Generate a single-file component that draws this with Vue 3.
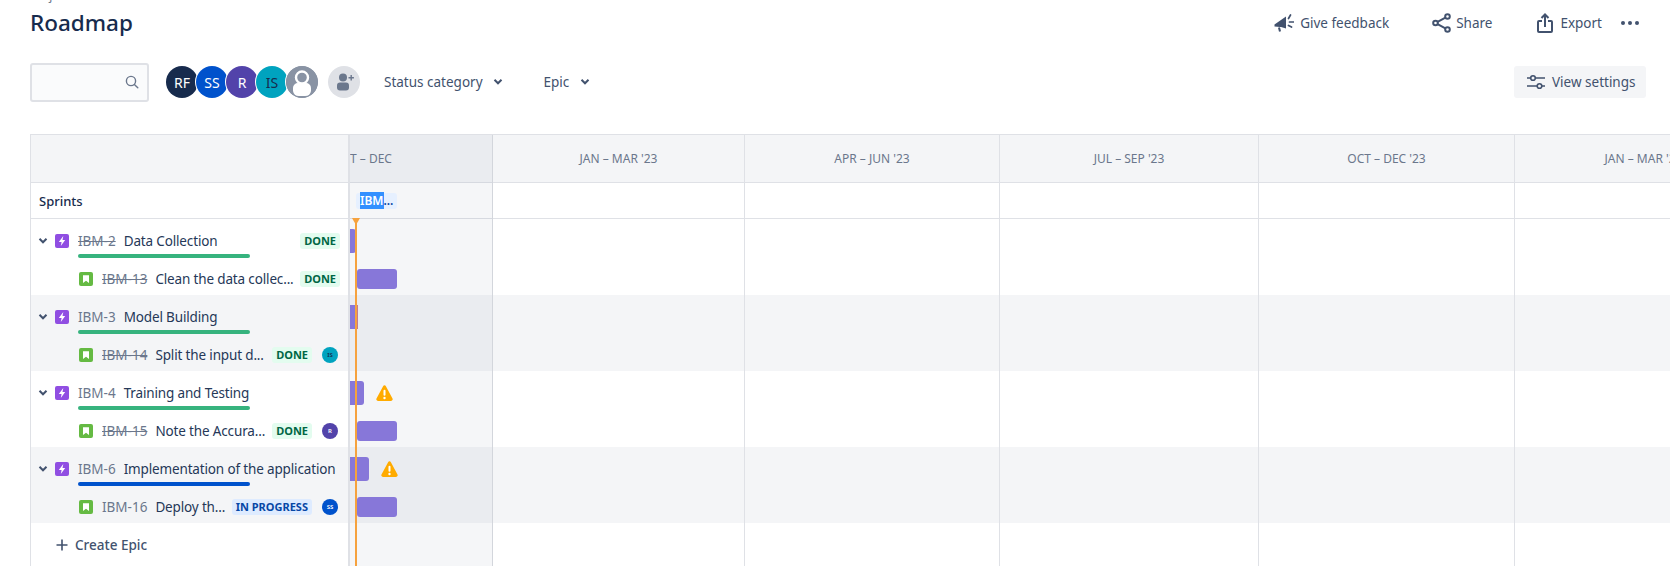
<script setup>
const quarters = [
  { label: 'OCT – DEC', width: 260, current: true },
  { label: "JAN – MAR '23", width: 252 },
  { label: "APR – JUN '23", width: 255 },
  { label: "JUL – SEP '23", width: 259 },
  { label: "OCT – DEC '23", width: 256 },
  { label: "JAN – MAR '24", width: 258 }
]
const groups = [
  {
    id: 'IBM-2', name: 'Data Collection', done: true, tone: 'green', bar: [0, 6], warnAt: null,
    story: { id: 'IBM-13', name: 'Clean the data collec...', done: true, status: 'DONE', avatar: null, bar: [7, 47] }
  },
  {
    id: 'IBM-3', name: 'Model Building', done: false, tone: 'green', bar: [0, 8], warnAt: null, tip: true,
    story: { id: 'IBM-14', name: 'Split the input d...', done: true, status: 'DONE', avatar: { text: 'IS', color: '#00A3BF', ink: '#172B4D' }, bar: null }
  },
  {
    id: 'IBM-4', name: 'Training and Testing', done: false, tone: 'green', bar: [0, 14], warnAt: 26,
    story: { id: 'IBM-15', name: 'Note the Accura...', done: true, status: 'DONE', avatar: { text: 'R', color: '#5243AA', ink: '#fff' }, bar: [7, 47] }
  },
  {
    id: 'IBM-6', name: 'Implementation of the application', done: false, tone: 'blue', bar: [0, 19], warnAt: 31,
    story: { id: 'IBM-16', name: 'Deploy th...', done: false, status: 'IN PROGRESS', avatar: { text: 'SS', color: '#0052CC', ink: '#fff' }, bar: [7, 47] }
  }
]
const people = [
  { text: 'RF', color: '#172B4D', ink: '#fff' },
  { text: 'SS', color: '#0052CC', ink: '#fff' },
  { text: 'R', color: '#5243AA', ink: '#fff' },
  { text: 'IS', color: '#00A3BF', ink: '#172B4D' }
]
</script>

<template>
  <div class="page">
    <div class="crumbs">Projects / IBM</div>
    <header class="top">
      <h1>Roadmap</h1>
      <div class="actions">
        <button class="act feedback">
          <svg width="20" height="20" viewBox="0 0 20 20"><path d="M0.500 11.500 12 3.500v12L7 14l-.9 0L0.500 13.500z" fill="#42526E"/><path d="M5 14.500l1 4" stroke="#42526E" stroke-width="2" fill="none"/><path d="M14.500 5.500l2-3.500M15.500 9h4M14.500 12.500l3 1.500" stroke="#42526E" stroke-width="1.700" fill="none" stroke-linecap="round"/></svg>
          Give feedback
        </button>
        <button class="act share">
          <svg width="19" height="20" viewBox="0 0 19 20" fill="none" stroke="#42526E" stroke-width="2"><circle cx="3.500" cy="10" r="2.300"/><circle cx="15.500" cy="3.500" r="2.300"/><circle cx="15.500" cy="16.500" r="2.300"/><path d="M5.600 8.900 13.400 4.700M5.600 11.100l7.800 4.200"/></svg>
          Share
        </button>
        <button class="act export">
          <svg width="16" height="20" viewBox="0 0 16 20" fill="none" stroke="#42526E" stroke-width="2"><path d="M5 8H2a1 1 0 0 0-1 1v9a1 1 0 0 0 1 1h12a1 1 0 0 0 1-1V9a1 1 0 0 0-1-1h-3"/><path d="M8 14V2M4.500 5 8 1.500 11.500 5"/></svg>
          Export
        </button>
        <button class="dots" aria-label="More"><i></i><i></i><i></i></button>
      </div>
    </header>

    <div class="toolbar">
      <div class="search">
        <svg width="16" height="16" viewBox="0 0 16 16" fill="none" stroke="#6B778C" stroke-width="1.400"><circle cx="7" cy="7" r="4.600"/><path d="m10.400 10.400 3.400 3.400" stroke-linecap="round"/></svg>
      </div>
      <div class="people">
        <span v-for="p in people" :key="p.text" class="person" :style="{ background: p.color, color: p.ink }">{{ p.text }}</span>
        <span class="person ghost">
          <svg width="32" height="32" viewBox="0 0 32 32"><circle cx="16" cy="16" r="16" fill="#8993A4"/><circle cx="16" cy="11.500" r="6" fill="none" stroke="#fff" stroke-width="2.400"/><path d="M7 25v-3a5 5 0 0 1 5-5h8a5 5 0 0 1 5 5v3a6 6 0 0 1-6 5h-6a6 6 0 0 1-6-5z" fill="#fff"/></svg>
        </span>
      </div>
      <span class="add">
        <svg width="20" height="20" viewBox="0 0 20 20" fill="#6B778C"><circle cx="9" cy="5.500" r="4"/><rect x="3" y="10.500" width="12" height="8" rx="3"/><path d="M14.500 5h2V3h1.400v2h2v1.400h-2v2h-1.400v-2h-2z"/></svg>
      </span>
      <button class="filter status">Status category
        <svg width="10" height="8" viewBox="0 0 10 8" fill="none" stroke="#42526E" stroke-width="2"><path d="M1.500 1.800 5 5.300l3.500-3.500"/></svg>
      </button>
      <button class="filter epic">Epic
        <svg width="10" height="8" viewBox="0 0 10 8" fill="none" stroke="#42526E" stroke-width="2"><path d="M1.500 1.800 5 5.300l3.500-3.500"/></svg>
      </button>
      <button class="settings">
        <svg width="18" height="16" viewBox="0 0 18 16" fill="none" stroke="#42526E" stroke-width="1.600"><path d="M0 4h3.500M8.500 4H18M0 12h10M15 12h3"/><circle cx="6" cy="4" r="2.300"/><circle cx="12.500" cy="12" r="2.300"/></svg>
        View settings
      </button>
    </div>

    <section class="board">
      <div class="row head">
        <div class="left"></div>
        <div class="lane"></div>
      </div>
      <div class="row sprints">
        <div class="left"><strong>Sprints</strong></div>
        <div class="lane">
          <span class="chip"><mark>IBM</mark>...</span>
        </div>
      </div>

      <div v-for="(g, i) in groups" :key="g.id" class="group" :class="{ shaded: i % 2 === 1 }">
        <div class="row epic-row">
          <div class="left">
            <svg class="chev" width="10" height="8" viewBox="0 0 10 8" fill="none" stroke="#42526E" stroke-width="2"><path d="M1.500 1.800 5 5.300l3.500-3.500"/></svg>
            <svg class="type" width="14" height="14" viewBox="0 0 14 14"><rect width="14" height="14" rx="2" fill="#904EE2"/><path d="M8.300 2 3.800 8h2.800l-.8 4 4.400-6H7.500z" fill="#fff"/></svg>
            <span class="key" :class="{ struck: g.done }">{{ g.id }}</span>
            <span class="name">{{ g.name }}</span>
            <span v-if="g.done" class="badge done end">DONE</span>
            <span class="progress" :class="g.tone"></span>
          </div>
          <div class="lane">
            <span class="bar" :class="{ tip: g.tip }" :style="{ left: g.bar[0] + 'px', width: g.bar[1] - g.bar[0] + 'px' }"></span>
            <svg v-if="g.warnAt" class="warn" :style="{ left: g.warnAt + 'px' }" width="17" height="16" viewBox="0 0 17 16"><path d="M7.100 1.200a1.600 1.600 0 0 1 2.800 0l6.600 12.300a1.600 1.600 0 0 1-1.400 2.400H1.900a1.600 1.600 0 0 1-1.400-2.400z" fill="#FFAB00"/><rect x="7.500" y="4.800" width="2" height="6" rx="1" fill="#fff"/><circle cx="8.500" cy="13" r="1.200" fill="#fff"/></svg>
          </div>
        </div>
        <div class="row story-row">
          <div class="left">
            <svg class="type story-type" width="14" height="14" viewBox="0 0 14 14"><rect width="14" height="14" rx="2" fill="#65BA43"/><path d="M4 3.300h6v7.700L7 8.700 4 11z" fill="#fff"/></svg>
            <span class="key" :class="{ struck: g.story.done }">{{ g.story.id }}</span>
            <span class="name clip">{{ g.story.name }}</span>
            <span class="badge" :class="[g.story.done ? 'done' : 'doing', g.story.avatar ? '' : 'end']">{{ g.story.status }}</span>
            <span v-if="g.story.avatar" class="mini" :style="{ background: g.story.avatar.color, color: g.story.avatar.ink }">{{ g.story.avatar.text }}</span>
          </div>
          <div class="lane">
            <span v-if="g.story.bar" class="bar small" :style="{ left: g.story.bar[0] + 'px', width: g.story.bar[1] - g.story.bar[0] + 'px' }"></span>
          </div>
        </div>
      </div>

      <div class="row create">
        <div class="left">
          <svg width="14" height="14" viewBox="0 0 14 14" stroke="#42526E" stroke-width="1.600"><path d="M7 1.500v11M1.500 7h11"/></svg>
          Create Epic
        </div>
        <div class="lane"></div>
      </div>

      <div class="grid-lines">
        <div v-for="q in quarters" :key="q.label" class="col" :class="{ now: q.current }" :style="{ width: q.width + 'px' }">
          <span class="col-label">{{ q.label }}</span>
        </div>
      </div>
      <div class="today"></div>
    </section>
  </div>
</template>

<style>
html, body { margin: 0; overflow: hidden; background: #fff; }
</style>

<style scoped>
.page {
  height: 566px;
  overflow: hidden;
  display: flex;
  flex-direction: column;
  font-family: "Noto Sans", "Open Sans", sans-serif;
  font-size: 13.500px;
  color: #172B4D;
}
button { font: inherit; border: 0; background: none; padding: 0; color: #42526E; display: inline-flex; align-items: center; }
.crumbs { height: 12px; margin-top: -10px; font-size: 12px; line-height: 12px; color: #6B778C; padding-left: 30px; flex: none; }
.top { height: 42px; flex: none; display: flex; align-items: center; justify-content: space-between; padding: 0 31px 0 30px; box-sizing: border-box; }
h1 { margin: 0; font-size: 22.500px; font-weight: 500; line-height: 28px; color: #172B4D; }
.actions { display: flex; align-items: center; }
.act { gap: 6px; }
.share { margin-left: 43px; gap: 5px; }
.export { margin-left: 45px; gap: 7px; }
.dots { margin-left: 19px; width: 18px; justify-content: space-between; }
.dots i { width: 4px; height: 4px; border-radius: 50%; background: #42526E; }
.toolbar { display: flex; align-items: center; flex: none; height: 40px; margin-top: 18px; padding: 0 24px 0 30px; }
.search { width: 119px; height: 39px; box-sizing: border-box; border: 2px solid #DFE1E6; border-radius: 3px; background: #FAFBFC; display: flex; align-items: center; justify-content: flex-end; padding-right: 7px; }
.people { display: flex; margin-left: 17px; }
.person { width: 32px; height: 32px; border-radius: 50%; margin-left: -2px; display: flex; align-items: center; justify-content: center; font-size: 14px; box-shadow: 0 0 0 1px #fff; }
.person:first-child { margin-left: 0; }
.ghost { background: #8993A4; overflow: hidden; }
.add { width: 32px; height: 32px; margin-left: 10px; border-radius: 50%; background: #DFE1E6; display: flex; align-items: center; justify-content: center; }
.filter { gap: 10px; }
.status { margin-left: 24px; }
.epic { margin-left: 41px; gap: 11px; }
.settings { margin-left: auto; width: 132px; height: 32px; background: #F4F5F7; border-radius: 3px; gap: 7px; padding-left: 13px; box-sizing: border-box; }

.board { position: relative; flex: 1; margin: 32px 0 0 30px; border-top: 1px solid #DFE1E6; border-left: 1px solid #DFE1E6; overflow: hidden; }
.row { display: flex; }
.left { width: 319px; flex: none; box-sizing: border-box; border-right: 2px solid #DFE1E6; position: relative; display: flex; align-items: center; }
.lane { flex: 1; position: relative; }
.head { height: 47px; background: #F4F5F7; border-bottom: 1px solid #DFE1E6; }
.sprints { height: 35px; border-bottom: 1px solid #DFE1E6; }
.sprints .left { padding-left: 8px; }
.sprints strong { font-weight: 500; font-size: 13px; }
.chip { position: absolute; left: 6px; top: 10px; height: 16px; width: 41px; box-sizing: border-box; padding-left: 4px; background: #E6F0FF; border-radius: 3px; font-size: 12px; font-weight: 600; line-height: 16px; color: #0747A6; z-index: 3; }
.chip mark { background: #3390FF; color: #fff; }
.group { height: 76px; }
.group.shaded { background: #F4F5F7; }
.epic-row { height: 44px; }
.story-row { height: 32px; }
.epic-row .left { padding-left: 7px; }
.story-row .left { padding-left: 48px; }
.chev { margin-right: 7px; flex: none; }
.type { flex: none; margin-right: 9px; }
.key { color: #6B778C; margin-right: 8px; white-space: nowrap; }
.key.struck { text-decoration: line-through; }
.name { white-space: nowrap; color: #253858; letter-spacing: -0.150px; }
.badge { font-size: 11px; font-weight: 700; line-height: 16px; height: 16px; padding: 0 4px; border-radius: 3px; white-space: nowrap; }
.badge.done { background: #E3FCEF; color: #006644; }
.badge.doing { background: #DEEBFF; color: #0747A6; }
.badge.end { position: absolute; right: 8px; }
.badge:not(.end) { position: absolute; right: 36px; }
.mini { position: absolute; right: 10px; width: 16px; height: 16px; border-radius: 50%; font-size: 6px; font-weight: 600; display: flex; align-items: center; justify-content: center; }
.progress { position: absolute; left: 47px; top: 35px; width: 172px; height: 4px; border-radius: 2px; }
.progress.green { background: #36B37E; }
.progress.blue { background: #0052CC; }
.bar { position: absolute; top: 10px; height: 24px; background: #8777D9; border-radius: 0 3px 3px 0; z-index: 2; }
.bar.tip { box-shadow: inset -2px 0 0 #C27C8E; border-radius: 0; }
.bar.small { top: 6px; height: 20px; border-radius: 3px; }
.warn { position: absolute; top: 14px; z-index: 2; }
.create { height: 43px; }
.create .left { padding-left: 24px; gap: 6px; color: #42526E; font-weight: 500; }

.grid-lines { position: absolute; left: 319px; right: 0; top: 0; bottom: 0; overflow: hidden; display: flex; pointer-events: none; }
.col { flex: none; box-sizing: border-box; border-right: 1px solid #DFE1E6; text-align: center; }
.col.now { margin-left: -117px; background: rgba(9, 30, 66, 0.04); border-right-color: #D3D6DC; }
.col-label { display: block; line-height: 47px; font-size: 12px; color: #6B778C; }
.today { position: absolute; left: 324px; top: 83px; bottom: 0; width: 2px; background: #F6A23E; z-index: 4; }
.today::before { content: ""; position: absolute; left: -3px; top: 0; border: 4px solid transparent; border-top: 7px solid #F6A23E; border-bottom: 0; }
</style>
